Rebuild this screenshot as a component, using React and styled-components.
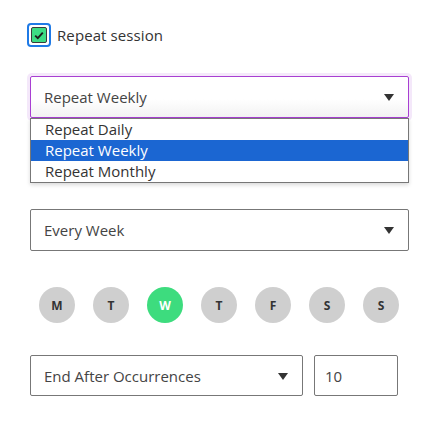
import styled, { createGlobalStyle } from "styled-components";

const GlobalStyle = createGlobalStyle`
  body {
    margin: 0;
    background: #fff;
    font-family: "Open Sans", "Liberation Sans", sans-serif;
    color: #333;
  }
`;

const days = [
  { label: "M" },
  { label: "T" },
  { label: "W", active: true },
  { label: "T" },
  { label: "F" },
  { label: "S" },
  { label: "S" },
];

const options = ["Repeat Daily", "Repeat Weekly", "Repeat Monthly"];

export default function App() {
  return (
    <Page>
      <GlobalStyle />
      <CheckRow>
        <CheckRing>
          <CheckBox>
            <svg width="10" height="9" viewBox="0 0 10 9">
              <path d="M1.2 4.6 L3.8 7.2 L8.8 1.6" fill="none" stroke="#1d1d1d" strokeWidth="1.9" />
            </svg>
          </CheckBox>
        </CheckRing>
        <CheckLabel>Repeat session</CheckLabel>
      </CheckRow>

      <SelectWrap>
        <Select $focused>
          <span>Repeat Weekly</span>
          <Arrow />
        </Select>
        <Menu>
          {options.map((o) => (
            <MenuItem key={o} $selected={o === "Repeat Weekly"}>
              {o}
            </MenuItem>
          ))}
        </Menu>
      </SelectWrap>

      <Select $top={91}>
        <span>Every Week</span>
        <Arrow />
      </Select>

      <Days>
        {days.map((d, i) => (
          <Day key={i} $active={d.active}>
            {d.label}
          </Day>
        ))}
      </Days>

      <EndRow>
        <Select $width={273} $height={41}>
          <span>End After Occurrences</span>
          <Arrow />
        </Select>
        <Input>10</Input>
      </EndRow>
    </Page>
  );
}

const Page = styled.div`
  padding: 24px 0 0 30px;
  width: 380px;
  display: flex;
  flex-direction: column;
`;

const CheckRow = styled.div`
  display: flex;
  align-items: center;
  gap: 6px;
  margin-left: -3px;
  height: 22px;
`;

const CheckRing = styled.div`
  width: 20px;
  height: 20px;
  border: 2px solid #1f7ae6;
  border-radius: 4px;
  display: flex;
  align-items: center;
  justify-content: center;
  box-sizing: content-box;
`;

const CheckBox = styled.div`
  width: 14px;
  height: 14px;
  border: 1px solid #3a3a3a;
  border-radius: 2px;
  background: #3ddc84;
  display: flex;
  align-items: center;
  justify-content: center;
`;

const CheckLabel = styled.span`
  font-size: 15px;
  letter-spacing: 0.1px;
  color: #333;
`;

const SelectWrap = styled.div`
  position: relative;
  margin-top: 30px;
`;

const Select = styled.div`
  box-sizing: border-box;
  width: ${(p) => p.$width || 379}px;
  height: ${(p) => p.$height || 42}px;
  margin-top: ${(p) => p.$top || 0}px;
  border: 1px solid ${(p) => (p.$focused ? "#a83fd2" : "#777")};
  border-radius: 2px;
  background: ${(p) => (p.$focused ? "linear-gradient(#fff 55%, #f2f2f2)" : "#fff")};
  box-shadow: ${(p) => (p.$focused ? "0 0 0 3px rgba(168, 63, 210, 0.12)" : "none")};
  display: flex;
  align-items: center;
  justify-content: space-between;
  padding: 0 14px 0 13px;
  font-size: 15px;
  color: #444;
`;

const Arrow = styled.span`
  width: 0;
  height: 0;
  border-left: 5px solid transparent;
  border-right: 5px solid transparent;
  border-top: 7px solid #333;
  margin-top: 1px;
`;

const Menu = styled.div`
  position: absolute;
  left: 0;
  top: 42px;
  width: 379px;
  box-sizing: border-box;
  border: 1px solid #777;
  background: #fff;
  box-shadow: 0 2px 4px rgba(0, 0, 0, 0.15);
`;

const MenuItem = styled.div`
  height: 21px;
  line-height: 21px;
  padding-left: 14px;
  font-size: 15px;
  color: ${(p) => (p.$selected ? "#fff" : "#333")};
  background: ${(p) => (p.$selected ? "#1b66d2" : "transparent")};
`;

const Days = styled.div`
  display: flex;
  gap: 18px;
  margin: 36px 0 0 9px;
`;

const Day = styled.div`
  width: 36px;
  height: 36px;
  border-radius: 50%;
  background: ${(p) => (p.$active ? "#3ddc7e" : "#cfcfcf")};
  color: ${(p) => (p.$active ? "#fff" : "#333")};
  font-size: 12px;
  font-weight: 700;
  display: flex;
  align-items: center;
  justify-content: center;
`;

const EndRow = styled.div`
  display: flex;
  gap: 11px;
  margin-top: 32px;
`;

const Input = styled.div`
  box-sizing: border-box;
  width: 84px;
  height: 41px;
  border: 1px solid #777;
  border-radius: 2px;
  display: flex;
  align-items: center;
  padding-left: 10px;
  font-size: 15px;
  color: #444;
`;
